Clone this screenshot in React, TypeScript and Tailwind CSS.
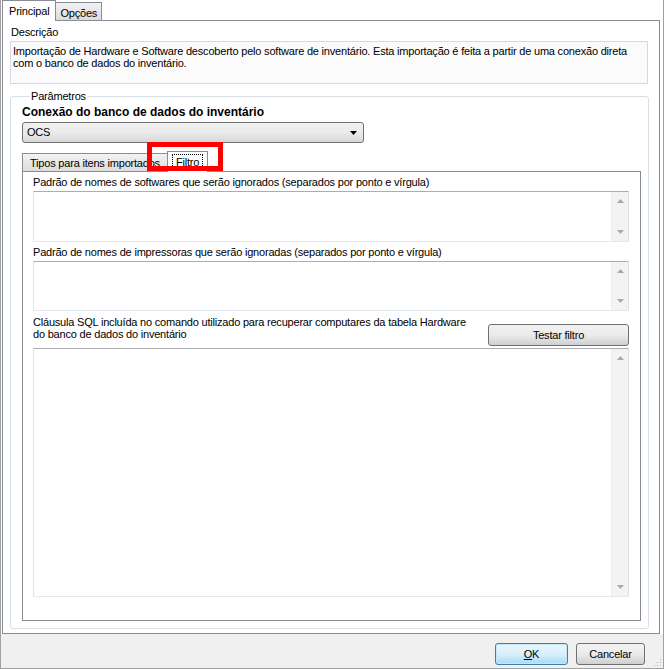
import React from "react";

function ScrollArrows() {
  return (
    <div className="w-[17px] self-stretch bg-[#f3f3f3] border-l border-[#ececec] flex flex-col items-center justify-between py-[7px]">
      <svg width="7" height="4" viewBox="0 0 7 4">
        <path d="M0 4 L3.5 0 L7 4 Z" fill="#a9a9a9" />
      </svg>
      <svg width="7" height="4" viewBox="0 0 7 4">
        <path d="M0 0 L3.5 4 L7 0 Z" fill="#a9a9a9" />
      </svg>
    </div>
  );
}

function TextBox({ height }: { height: string }) {
  return (
    <div
      className={`w-[596px] ${height} flex border border-t-[#abadb3] border-l-[#e2e3ea] border-r-[#dbdfe6] border-b-[#e3e9ef] bg-white`}
    >
      <div className="flex-1" />
      <ScrollArrows />
    </div>
  );
}

export default function App() {
  return (
    <div className="w-[664px] h-[669px] flex flex-col bg-white text-[11px] leading-[13px] tracking-[-0.2px] text-black font-['Liberation_Sans',Arial,sans-serif] border-l border-r border-b border-[#a0a0a0] overflow-hidden">
      {/* main tab strip */}
      <div className="flex items-end h-[20px] pl-[1px]">
        <div className="h-[21px] -mb-px relative z-10 px-[6px] pt-[4px] border border-b-0 border-[#898c95] bg-white">
          Principal
        </div>
        <div className="h-[18px] px-[4px] pt-[4px] border border-l-0 border-b-0 border-[#898c95] bg-gradient-to-b from-[#f3f3f3] to-[#dcdcdc]">
          Opções
        </div>
      </div>

      {/* tab page */}
      <div className="h-[614px] ml-[1px] mr-[3px] border border-[#898c95] bg-white px-[7px]">
        <div className="mt-[5px] pl-[1px] h-[14px]">Descrição</div>
        <div className="mt-[1px] w-[638px] h-[43px] border border-[#d9d9d9] bg-[#fbfbfb] px-[2px] pt-[3px] leading-[12px] whitespace-nowrap">
          Importação de Hardware e Software descoberto pelo software de inventário. Esta importação é feita a partir de uma conexão direta
          <br />
          com o banco de dados do inventário.
        </div>

        <fieldset className="mt-[6px] w-[639px] h-[539px] border border-[#d5dfe5] rounded-[3px] pl-[11px] pr-[7px]">
          <legend className="ml-[8px] px-[1px] leading-[12px]">Parâmetros</legend>
          <div className="mt-[4px] font-bold text-[12px] tracking-normal leading-[13px]">Conexão do banco de dados do inventário</div>
          <div className="mt-[3px] w-[342px] h-[21px] flex items-center justify-between pl-[4px] pr-[6px] border border-[#707070] rounded-[3px] bg-gradient-to-b from-[#f2f2f2] via-[#ebebeb] to-[#d8d8d8]">
            <span>OCS</span>
            <svg width="7" height="4" viewBox="0 0 7 4">
              <path d="M0 0 L7 0 L3.5 4 Z" fill="#000" />
            </svg>
          </div>

          {/* inner tab strip */}
          <div className="relative mt-[7px] flex items-end h-[21px]">
            <div className="h-[18px] px-[7px] pt-[3px] border border-r-0 border-b-0 border-[#898c95] bg-gradient-to-b from-[#f3f3f3] to-[#dcdcdc]">
              Tipos para itens importados
            </div>
            <div className="h-[21px] -mb-px relative z-10 px-[4px] pt-[2px] border border-b-0 border-[#898c95] bg-white">
              <span className="inline-block border border-dotted border-black px-[3px] h-[16px] leading-[14px]">Filtro</span>
            </div>
            <div className="absolute left-[125px] top-[-8px] w-[76px] h-[29px] border-[5px] border-[#ff0000] z-20" />
          </div>

          {/* inner tab page */}
          <div className="w-[619px] h-[450px] border border-[#898c95] bg-white pl-[10px]">
            <div className="mt-[4px] h-[14px]">
              Padrão de nomes de softwares que serão ignorados (separados por ponto e vírgula)
            </div>
            <div className="mt-[1px]">
              <TextBox height="h-[51px]" />
            </div>
            <div className="mt-[4px] h-[14px]">
              Padrão de nomes de impressoras que serão ignoradas (separados por ponto e vírgula)
            </div>
            <div className="mt-[1px]">
              <TextBox height="h-[50px]" />
            </div>
            <div className="mt-[4px] w-[596px] flex items-start justify-between h-[33px]">
              <div className="leading-[12px] pt-[1px]">
                Cláusula SQL incluída no comando utilizado para recuperar computares da tabela Hardware
                <br />
                do banco de dados do inventário
              </div>
              <button className="mt-[9px] w-[141px] h-[22px] border border-[#707070] rounded-[3px] bg-gradient-to-b from-[#f2f2f2] via-[#ebebeb] to-[#cfcfcf] text-[11px]">
                Testar filtro
              </button>
            </div>
            <div>
              <TextBox height="h-[249px]" />
            </div>
          </div>
        </fieldset>
      </div>

      {/* bottom bar */}
      <div className="flex-1 bg-[#f0f0f0] flex items-start justify-end gap-[8px] pt-[9px] pr-[18px] relative">
        <button className="w-[73px] h-[22px] border border-[#3c7fb1] rounded-[3px] bg-gradient-to-b from-[#eaf6fd] via-[#d9f0fc] to-[#a7d9f5] shadow-[inset_0_0_0_1px_#c4e5f6]">
          <span className="underline">O</span>K
        </button>
        <button className="w-[69px] h-[22px] border border-[#707070] rounded-[3px] bg-gradient-to-b from-[#f2f2f2] via-[#ebebeb] to-[#cfcfcf]">
          Cancelar
        </button>
        <svg className="absolute right-[1px] bottom-[1px]" width="10" height="10" viewBox="0 0 10 10">
          <rect x="8" y="2" width="1" height="1" fill="#b0b0b0" />
          <rect x="5" y="5" width="1" height="1" fill="#b0b0b0" />
          <rect x="8" y="5" width="1" height="1" fill="#b0b0b0" />
          <rect x="2" y="8" width="1" height="1" fill="#b0b0b0" />
          <rect x="5" y="8" width="1" height="1" fill="#b0b0b0" />
          <rect x="8" y="8" width="1" height="1" fill="#b0b0b0" />
        </svg>
      </div>
    </div>
  );
}
